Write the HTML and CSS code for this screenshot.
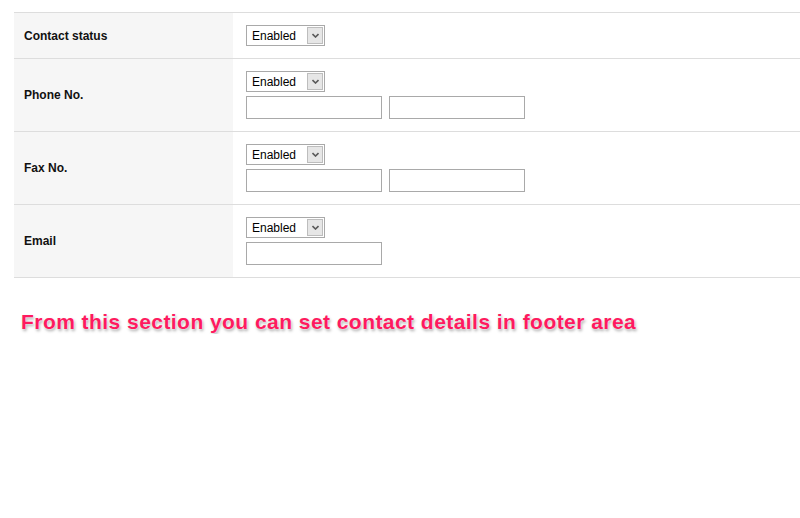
FILE: index.html
```
<!DOCTYPE html>
<html>
<head>
<meta charset="utf-8">
<link rel="stylesheet" href="styles.css">
</head>
<body>
<div class="page">
  <div class="form">
    <div class="row">
      <div class="label">Contact status</div>
      <div class="field">
        <div class="select"><span class="val">Enabled</span><span class="arrow"><svg width="7" height="5" viewBox="0 0 7 5"><path d="M0.5 1 L3.5 4 L6.5 1" fill="none" stroke="#5a5a5a" stroke-width="1.6"/></svg></span></div>
      </div>
    </div>
    <div class="row">
      <div class="label">Phone No.</div>
      <div class="field">
        <div class="select"><span class="val">Enabled</span><span class="arrow"><svg width="7" height="5" viewBox="0 0 7 5"><path d="M0.5 1 L3.5 4 L6.5 1" fill="none" stroke="#5a5a5a" stroke-width="1.6"/></svg></span></div>
        <div class="inputs"><input class="text" type="text"><input class="text" type="text"></div>
      </div>
    </div>
    <div class="row">
      <div class="label">Fax No.</div>
      <div class="field">
        <div class="select"><span class="val">Enabled</span><span class="arrow"><svg width="7" height="5" viewBox="0 0 7 5"><path d="M0.5 1 L3.5 4 L6.5 1" fill="none" stroke="#5a5a5a" stroke-width="1.6"/></svg></span></div>
        <div class="inputs"><input class="text" type="text"><input class="text" type="text"></div>
      </div>
    </div>
    <div class="row">
      <div class="label">Email</div>
      <div class="field">
        <div class="select"><span class="val">Enabled</span><span class="arrow"><svg width="7" height="5" viewBox="0 0 7 5"><path d="M0.5 1 L3.5 4 L6.5 1" fill="none" stroke="#5a5a5a" stroke-width="1.6"/></svg></span></div>
        <div class="inputs"><input class="text" type="text"></div>
      </div>
    </div>
  </div>
  <p class="note">From this section you can set contact details in footer area</p>
</div>
</body>
</html>
```
FILE: styles.css
```
html, body {
  margin: 0;
  padding: 0;
  background: #fff;
  font-family: "Liberation Sans", Arial, sans-serif;
}
.page {
  padding: 12px 0 0 14px;
}
.form {
  border-top: 1px solid #dddddd;
}
.row {
  display: flex;
  border-bottom: 1px solid #dddddd;
}
.label {
  width: 200px;
  flex: none;
  background: #f6f6f6;
  padding: 0 9px 0 10px;
  display: flex;
  align-items: center;
  font-size: 12px;
  font-weight: bold;
  color: #111;
}
.field {
  flex: 1;
  padding: 12px 12px 12px 13px;
  display: flex;
  flex-direction: column;
  gap: 4px;
}
.select {
  box-sizing: border-box;
  width: 79px;
  height: 21px;
  border: 1px solid #a9a9a9;
  background: #fff;
  display: flex;
  align-items: center;
  justify-content: space-between;
  padding: 0 1px 0 5px;
  font-size: 12px;
  color: #000;
}
.arrow {
  box-sizing: border-box;
  width: 16px;
  height: 17px;
  border: 1px solid #bdbdbd;
  background: #e6e6e6;
  display: flex;
  align-items: center;
  justify-content: center;
}
.inputs {
  display: flex;
  gap: 7px;
}
.text {
  box-sizing: border-box;
  width: 136px;
  height: 23px;
  margin: 0;
  border: 1px solid #a9a9a9;
  background: #fff;
  padding: 2px 4px;
  font-family: "Liberation Sans", Arial, sans-serif;
  font-size: 12px;
}
.note {
  margin: 32px 0 0 7px;
  font-size: 21px;
  letter-spacing: 0.45px;
  font-weight: bold;
  color: #fe1a5f;
  text-shadow: 0 0 2px #fff, 1px 2px 3px rgba(0, 0, 0, 0.35);
}
```
